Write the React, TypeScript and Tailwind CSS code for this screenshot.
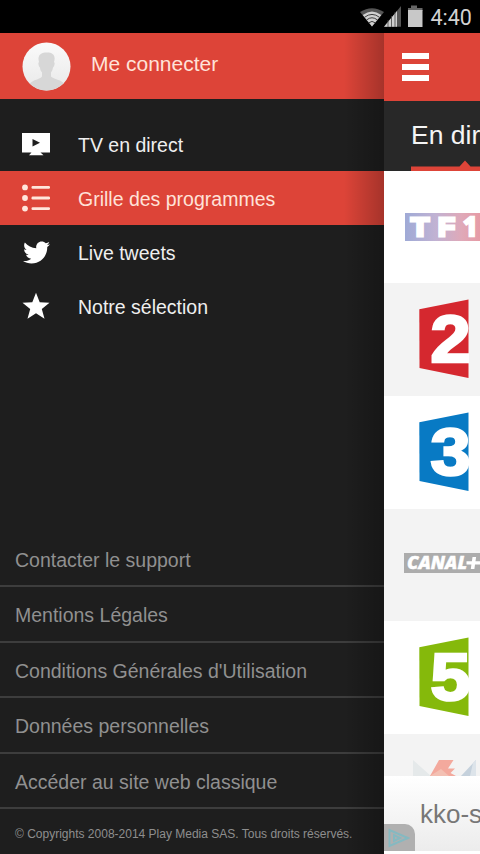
import React from "react";
import { FaTwitter } from "react-icons/fa";

const TvIcon = () => (
  <svg width="28" height="24" viewBox="0 0 28 24">
    <path fill="#fff" d="M0 1h28v19.500H18.500l3 2.700H7l2.500-2.700H0z" />
    <path fill="#1e1e1e" d="M10.500 7v7.500l7.500-3.750z" />
  </svg>
);

const ListIcon = () => (
  <svg width="28" height="28" viewBox="0 0 28 28" fill="#ffe6dc">
    {[3.4, 14, 24.6].map((y) => (
      <g key={y}>
        <circle cx="3" cy={y} r="2.900" />
        <rect x="9.500" y={y - 1.4} width="18.500" height="2.800" rx="1.200" />
      </g>
    ))}
  </svg>
);

const StarIcon = () => (
  <svg width="28" height="28" viewBox="0 0 28 28">
    <path fill="#fff" d="M14 .8 17.700 10.200 27.500 10.700 19.800 16.900 22.500 26.800 14 21.300 5.500 26.800 8.200 16.900.500 10.700 10.300 10.200z" />
  </svg>
);

const menu = [
  { label: "TV en direct", icon: <TvIcon />, active: false },
  { label: "Grille des programmes", icon: <ListIcon />, active: true },
  { label: "Live tweets", icon: <FaTwitter size={27} color="#fff" />, active: false },
  { label: "Notre sélection", icon: <StarIcon />, active: false },
];

const links = [
  "Contacter le support",
  "Mentions Légales",
  "Conditions Générales d'Utilisation",
  "Données personnelles",
  "Accéder au site web classique",
];

const FranceLogo = ({ n, color }: { n: string; color: string }) => (
  <svg className="ml-[35px] shrink-0" width="50" height="80" viewBox="0 0 50 80" overflow="hidden">
    <path fill={color} d="M.3 10.300 49.500.500V79L.500 69z" />
    <text
      x="11.500"
      y="63"
      fontFamily="Liberation Sans, sans-serif"
      fontWeight="700"
      fontSize="66"
      textLength="40"
      lengthAdjust="spacingAndGlyphs"
      fill="#fff"
      stroke="#fff"
      strokeWidth="2.600"
    >
      {n}
    </text>
  </svg>
);

const Tf1Logo = () => (
  <svg className="ml-[21px] shrink-0" width="75" height="28" viewBox="0 0 75 28">
    <defs>
      <linearGradient id="tf1">
        <stop offset="0" stopColor="#9faad6" />
        <stop offset=".4" stopColor="#c0b2d3" />
        <stop offset=".75" stopColor="#dfa9b9" />
        <stop offset="1" stopColor="#e69ba5" />
      </linearGradient>
    </defs>
    <rect width="75" height="28" fill="url(#tf1)" />
    <g fontFamily="Liberation Sans, sans-serif" fontWeight="700" fontSize="26" fill="#fff" stroke="#fff" strokeWidth="3">
      <text x="6" y="23" textLength="18" lengthAdjust="spacingAndGlyphs">T</text>
      <text x="33" y="23" textLength="17" lengthAdjust="spacingAndGlyphs">F</text>
      <text x="58" y="23" fontFamily="Open Sans, sans-serif" strokeWidth="2.500">1</text>
    </g>
  </svg>
);

const CanalLogo = () => (
  <svg className="ml-[20px] shrink-0" width="76" height="20" viewBox="0 0 76 20">
    <rect width="76" height="20" fill="#acacac" />
    <text
      x="3"
      y="15.800"
      fontFamily="Open Sans, sans-serif"
      fontStyle="italic"
      fontWeight="800"
      fontSize="17.500"
      textLength="60"
      lengthAdjust="spacingAndGlyphs"
      fill="#fff"
      stroke="#fff"
      strokeWidth=".4"
    >
      CANAL
    </text>
    <path fill="#fff" d="M68.500 4h3.600l-.6 4.300H76v3.300h-5l-.6 4.400h-3.600l.6-4.400H62.500V8.300h5.400z" />
  </svg>
);

const M6Logo = () => (
  <svg className="ml-[28px] mt-[25px] shrink-0" width="68" height="30" viewBox="0 0 68 30">
    <path fill="#e5e9ea" d="M1 1 19 17H1z" />
    <path fill="#f3a99d" d="M27 1h14.500L36 9.500h7L38.500 14l5.500 3H18z" />
    <path fill="#f3c0b3" d="m29 10 8 7H18z" />
    <path fill="#c5d1dc" d="M49 17 64 1v16z" />
    <path fill="#dde4ea" d="M61 4 64 1v16h-6z" />
  </svg>
);

const StatusBar = () => (
  <div className="flex h-[33px] shrink-0 items-center bg-black pl-[360px]">
    <svg className="shrink-0" width="64" height="26" viewBox="0 0 64 26">
      <path fill="#555" d="M0 8Q12 .3 24 8L12 22.500z" />
      <path fill="#d0d0d0" d="M2.700 11Q12 4 21.300 11L12 22.500z" />
      <g fill="none" stroke="#303030" strokeWidth=".9">
        <path d="M4.500 13.300Q12 7.500 19.500 13.300M6.500 16Q12 11.500 17.500 16M8.800 18.800Q12 16 15.200 18.800" />
      </g>
      <path fill="#555" d="M41 2v20.800H24z" />
      <path fill="#d0d0d0" d="M37 7v15.800H24z" />
      <path stroke="#444" strokeWidth=".8" d="M28 16v7M31.500 12v11M35 8v15" />
      <path fill="#666" d="M48 4h3V1.500h6V4h5.500v3H48z" />
      <path fill="#c8c8c8" d="M48 6h14.500v17H48z" />
    </svg>
    <span className="ml-[6.500px] mt-[2px] whitespace-nowrap font-['Roboto',sans-serif] text-[21.500px] leading-none text-[#d2d2d2]">4:40</span>
  </div>
);

const Drawer = () => (
  <div className="relative flex w-[384px] shrink-0 flex-col bg-[#1e1e1e]">
    <div className="flex h-[66px] shrink-0 items-center bg-[#dd4438] pl-[22px]">
      <svg className="shrink-0" width="49" height="49" viewBox="0 0 49 49">
        <defs>
          <clipPath id="avatar"><circle cx="24.500" cy="24.500" r="24" /></clipPath>
          <linearGradient id="shade" x2="0" y2="1">
            <stop offset="0" stopColor="#fafafa" />
            <stop offset="1" stopColor="#e9e9e9" />
          </linearGradient>
        </defs>
        <g clipPath="url(#avatar)">
          <rect width="49" height="49" fill="url(#shade)" />
          <path fill="#d7d7d7" d="M17 20c-2-7 2-9.500 8-9.500s9 3 7 9.500c1.500 1 0 5-1 5.500-.5 3-1.500 4-2 5v4c3 3 10 3 13 7l-3 8H11l-3-8c3-4 10-4 12-7v-4c-1-1-2-3-2-5-1-.5-2.500-4.500-1-5.500z" />
        </g>
      </svg>
      <span className="ml-[20px] mt-[-5px] text-[21px] text-[#ffe2d8]">Me connecter</span>
    </div>
    <nav className="mt-[18px] flex flex-col">
      {menu.map((m) => (
        <div
          key={m.label}
          className={`flex h-[54px] items-center pl-[22px] text-[19.500px] ${m.active ? "bg-[#dd4438] text-[#ffe2d8]" : "text-[#efefef]"}`}
        >
          <span className="flex w-[28px] justify-center">{m.icon}</span>
          <span className="ml-[28px] mt-[4px]">{m.label}</span>
        </div>
      ))}
    </nav>
    <div className="mt-auto flex flex-col">
      {links.map((l) => (
        <div key={l} className="flex h-[55.500px] items-center border-b-2 border-[#3d3d3d] pl-[15px] text-[19.500px] text-[#909090]">
          <span className="mt-[4px]">{l}</span>
        </div>
      ))}
      <div className="flex h-[45px] items-center pl-[15px] text-[12px] text-[#8e8e8e]">
        <span className="mt-[5px] whitespace-nowrap">© Copyrights 2008-2014 Play Media SAS. Tous droits réservés.</span>
      </div>
    </div>
    <div className="absolute inset-y-0 right-0 w-[40px] bg-linear-to-r from-black/0 to-black/25" />
  </div>
);

const Content = () => (
  <div className="flex w-[96px] flex-col overflow-hidden bg-white">
    <div className="flex h-[68px] shrink-0 items-center bg-[#dd4438] pl-[18px]">
      <div className="flex flex-col gap-[5px]">
        <div className="h-[6px] w-[27px] bg-white" />
        <div className="h-[6px] w-[27px] bg-white" />
        <div className="h-[6px] w-[27px] bg-white" />
      </div>
    </div>
    <div className="flex h-[70px] shrink-0 flex-col justify-between bg-[#282828] pl-[27px]">
      <span className="mt-[14px] whitespace-nowrap text-[26.500px] leading-[40px] text-[#f5f5f5]">En direct</span>
      <svg className="shrink-0" width="69" height="11" viewBox="0 0 69 11">
        <path fill="#dd4438" d="M0 6.500h48.500L54 .5l5.500 6H69V11H0z" />
      </svg>
    </div>
    <div className="flex h-[112px] shrink-0 items-center"><Tf1Logo /></div>
    <div className="flex h-[113px] shrink-0 items-center bg-[#f3f3f3] pb-[2px]"><FranceLogo n="2" color="#d5282f" /></div>
    <div className="flex h-[113px] shrink-0 items-center pb-[2px]"><FranceLogo n="3" color="#087ac4" /></div>
    <div className="flex h-[112px] shrink-0 items-center bg-[#f3f3f3] pb-[4px]"><CanalLogo /></div>
    <div className="flex h-[113px] shrink-0 items-center pb-[2px]"><FranceLogo n="5" color="#85b90b" /></div>
    <div className="flex h-[42px] shrink-0 items-start overflow-hidden bg-[#f3f3f3]"><M6Logo /></div>
    <div className="relative h-[75px] shrink-0 bg-linear-to-b from-white to-[#ececec]">
      <div className="whitespace-nowrap pl-[36px] pt-[18px] text-[26px] leading-[40px] text-[#777]">kko-s</div>
      <div className="absolute bottom-0 left-0 flex h-[27px] w-[31px] items-center rounded-tr-[10px] bg-[#b0b0b0] pl-[4px]">
        <svg width="22" height="20" viewBox="0 0 22 20" fill="none" stroke="#85b9c1" strokeWidth="2">
          <path d="M1.500 2v16L20 10zM6 7v6l6-3z" />
        </svg>
      </div>
    </div>
  </div>
);

export default function App() {
  return (
    <div className="flex h-[854px] w-[480px] flex-col overflow-hidden bg-white font-['Liberation_Sans',Arial,sans-serif]">
      <StatusBar />
      <div className="flex flex-1 overflow-hidden">
        <Drawer />
        <Content />
      </div>
    </div>
  );
}
